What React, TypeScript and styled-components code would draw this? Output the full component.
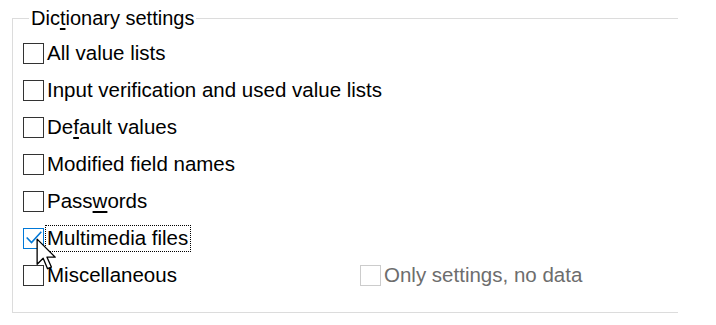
import React from 'react';
import styled, { createGlobalStyle } from 'styled-components';

const GlobalStyle = createGlobalStyle`
  body {
    margin: 0;
    background: #ffffff;
    font-family: "Liberation Sans", Arial, sans-serif;
  }
`;

const Page = styled.div`
  position: relative;
  width: 716px;
  height: 325px;
  padding-top: 7px;
  box-sizing: border-box;
`;

const Group = styled.fieldset`
  margin: 0 0 0 12px;
  width: 666px;
  height: 306px;
  box-sizing: border-box;
  border: 1px solid #dcdcdc;
  border-right: none;
  padding: 0 0 0 10px;
`;

const Legend = styled.legend`
  margin-left: 6px;
  padding: 0 2px;
  font-size: 20px;
  color: #000;
  line-height: 22px;
`;

const List = styled.div`
  display: flex;
  flex-direction: column;
  gap: 17px;
  padding-top: 14px;
`;

const Row = styled.div<{ $split?: boolean }>`
  display: grid;
  grid-template-columns: ${(p) => (p.$split ? '337px auto' : 'auto')};
  justify-content: start;
  height: 20px;
`;

const Item = styled.label`
  display: flex;
  align-items: center;
  height: 20px;
`;

const Box = styled.span<{ $checked?: boolean; $disabled?: boolean }>`
  display: inline-flex;
  align-items: center;
  justify-content: center;
  width: 21px;
  height: 21px;
  box-sizing: border-box;
  border: 1px solid
    ${(p) => (p.$checked ? '#0078d7' : p.$disabled ? '#cccccc' : '#333333')};
  background: #fff;
  flex-shrink: 0;
`;

const Text = styled.span<{ $focused?: boolean; $disabled?: boolean }>`
  margin-left: 2px;
  padding: 1px 2px 2px 1px;
  font-size: 20.5px;
  line-height: 22px;
  color: ${(p) => (p.$disabled ? '#6d6d6d' : '#000')};
  outline: ${(p) => (p.$focused ? '1px dotted #000' : 'none')};
  white-space: nowrap;
`;

const Key = styled.span`
  text-decoration: underline;
  text-underline-offset: 3px;
`;

const Cursor = styled.svg`
  position: absolute;
  left: 36px;
  top: 238px;
`;

const Check = () => (
  <svg width="18" height="18" viewBox="0 0 16 16">
    <path d="M1.5 7.5 L5.8 12 L14.5 2.5" fill="none" stroke="#0078d7" strokeWidth="1.4" />
  </svg>
);

type Opt = { label: React.ReactNode; checked?: boolean; focused?: boolean };

const options: Opt[] = [
  { label: 'All value lists' },
  { label: 'Input verification and used value lists' },
  { label: <>De<Key>f</Key>ault values</> },
  { label: 'Modified field names' },
  { label: <>Pass<Key>w</Key>ords</> },
  { label: 'Multimedia files', checked: true, focused: true },
];

export default function App() {
  return (
    <Page>
      <GlobalStyle />
      <Group>
        <Legend>
          Dic<Key>t</Key>ionary settings
        </Legend>
        <List>
          {options.map((o, i) => (
            <Row key={i}>
              <Item>
                <Box $checked={o.checked}>{o.checked && <Check />}</Box>
                <Text $focused={o.focused}>{o.label}</Text>
              </Item>
            </Row>
          ))}
          <Row $split>
            <Item>
              <Box />
              <Text>Miscellaneous</Text>
            </Item>
            <Item>
              <Box $disabled />
              <Text $disabled>Only settings, no data</Text>
            </Item>
          </Row>
        </List>
      </Group>
      <Cursor width="22" height="34" viewBox="0 0 20 31">
        <path
          d="M1 1 L1 24 L6.5 18.5 L10.5 28 L14 26.5 L10 17.5 L17.5 17.5 Z"
          fill="#fff"
          stroke="#000"
          strokeWidth="1.2"
          strokeLinejoin="round"
        />
      </Cursor>
    </Page>
  );
}
